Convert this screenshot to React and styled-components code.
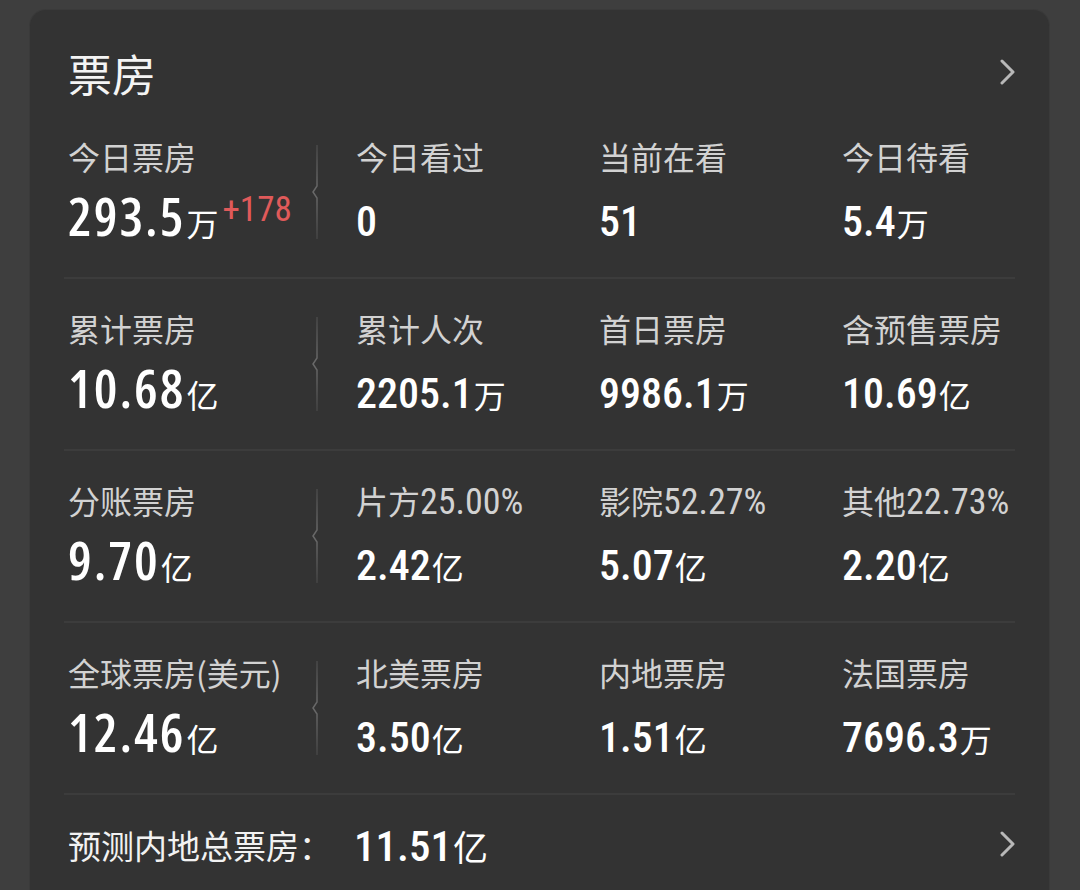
import React from "react";
import styled, { createGlobalStyle, css } from "styled-components";

const GlobalStyle = createGlobalStyle`
  html, body { margin: 0; padding: 0; background: #3e3e3e; }
  body { font-family: "Noto Sans CJK SC", "Noto Sans", sans-serif; overflow: hidden; }
`;

const BIG_FONT = `"Open Sans", "Roboto Condensed", Roboto, sans-serif`;
const SUB_FONT = `"Roboto Condensed", Roboto, "Noto Sans", sans-serif`;
const CJK_FONT = `"Noto Sans CJK SC", "Noto Sans", sans-serif`;

const Page = styled.div`
  padding: 10px 31px 0 30px;
  height: 890px;
  box-sizing: border-box;
`;

const Card = styled.section`
  background: #333333;
  border-radius: 16px;
  padding: 0 34px;
  box-shadow: 0 0 0 1px #3a3a3a;
`;

const Header = styled.div`
  display: flex;
  align-items: center;
  justify-content: space-between;
  padding: 38px 0 9px 4px;
  height: 50px;
`;

const Title = styled.h1`
  margin: 0;
  font-family: ${CJK_FONT};
  font-weight: 400;
  font-size: 44px;
  line-height: 50px;
  color: #f4f4f4;
`;

const ChevronBox = styled.span`
  display: flex;
  margin-right: -4px;
  margin-top: ${(p) => p.$dy || 0}px;
`;

const Chevron = ({ dy }) => (
  <ChevronBox $dy={dy}>
    <svg width="20" height="26" viewBox="0 0 20 26" fill="none">
      <polyline points="3,2 14,13 3,24" stroke="#b8b8b8" strokeWidth="3" strokeLinecap="round" strokeLinejoin="round" />
    </svg>
  </ChevronBox>
);

const Row = styled.div`
  display: grid;
  grid-template-columns: 288px 243px 243px 1fr;
  height: 170px;
  border-bottom: 2px solid #3c3c3c;
`;

const Cell = styled.div`
  display: flex;
  padding: 29px 0 0 4px;
  ${(p) => (p.$first ? "padding-right: 30px;" : "")}
`;

const CellBody = styled.div`
  flex: 1;
  display: flex;
  flex-direction: column;
`;

const Label = styled.div`
  font-family: ${CJK_FONT};
  font-size: 32px;
  line-height: 40px;
  height: 40px;
  color: #d2d2d2;
  white-space: nowrap;
  display: flex;
  align-items: baseline;
`;

const LabelNum = styled.span`
  font-family: ${SUB_FONT};
  font-stretch: 75%;
  font-size: 36px;
`;

const Value = styled.div`
  display: flex;
  align-items: baseline;
  margin-top: 12px;
  color: #ffffff;
  white-space: nowrap;
`;

const Num = styled.span`
  ${(p) =>
    p.$big
      ? css`
          font-family: ${BIG_FONT};
          font-stretch: 75%;
          font-weight: 600;
          font-size: 53px;
          line-height: 56px;
          letter-spacing: 2px;
        `
      : css`
          font-family: ${SUB_FONT};
          font-stretch: 75%;
          font-weight: 500;
          font-size: ${p.$size || 42}px;
          line-height: ${p.$lh || 68}px;
        `}
`;

const Unit = styled.span`
  font-family: ${CJK_FONT};
  font-size: ${(p) => p.$size || 32}px;
  margin-left: 1px;
`;

const Delta = styled.span`
  font-family: ${SUB_FONT};
  font-stretch: 75%;
  font-size: 35px;
  color: #e05a5a;
  align-self: flex-start;
  margin-left: 4px;
  line-height: 40px;
  margin-top: 2px;
`;

const SepSvg = styled.svg`
  flex: none;
  margin-top: 9px;
`;

const Separator = () => (
  <SepSvg width="10" height="94" viewBox="0 0 10 94">
    <defs>
      <linearGradient id="sepg" x1="0" y1="0" x2="0" y2="1">
        <stop offset="0" stopColor="#484848" />
        <stop offset="0.5" stopColor="#6a6a6a" />
        <stop offset="1" stopColor="#444444" />
      </linearGradient>
    </defs>
    <polyline points="5,0 5,41 1,47 5,53 5,94" fill="none" stroke="url(#sepg)" strokeWidth="1.5" />
  </SepSvg>
);

const Footer = styled.div`
  display: flex;
  align-items: center;
  padding: 28px 0 40px 4px;
  height: 44px;
`;

const FooterLabel = styled.span`
  font-family: ${CJK_FONT};
  font-size: 33px;
  color: #f2f2f2;
  line-height: 44px;
`;

const FooterValue = styled.span`
  display: flex;
  align-items: baseline;
  color: #ffffff;
  margin-left: 22px;
  flex: 1;
`;

const rows = [
  [
    { label: "今日票房", value: "293.5", unit: "万", delta: "+178" },
    { label: "今日看过", value: "0" },
    { label: "当前在看", value: "51" },
    { label: "今日待看", value: "5.4", unit: "万" },
  ],
  [
    { label: "累计票房", value: "10.68", unit: "亿" },
    { label: "累计人次", value: "2205.1", unit: "万" },
    { label: "首日票房", value: "9986.1", unit: "万" },
    { label: "含预售票房", value: "10.69", unit: "亿" },
  ],
  [
    { label: "分账票房", value: "9.70", unit: "亿" },
    { label: "片方", labelNum: "25.00%", value: "2.42", unit: "亿" },
    { label: "影院", labelNum: "52.27%", value: "5.07", unit: "亿" },
    { label: "其他", labelNum: "22.73%", value: "2.20", unit: "亿" },
  ],
  [
    { label: "全球票房(美元)", value: "12.46", unit: "亿" },
    { label: "北美票房", value: "3.50", unit: "亿" },
    { label: "内地票房", value: "1.51", unit: "亿" },
    { label: "法国票房", value: "7696.3", unit: "万" },
  ],
];

function Stat({ item, first }) {
  return (
    <Cell $first={first}>
      <CellBody>
        <Label>
          <span>{item.label}</span>
          {item.labelNum && <LabelNum>{item.labelNum}</LabelNum>}
        </Label>
        <Value>
          <Num $big={first}>{item.value}</Num>
          {item.unit && <Unit>{item.unit}</Unit>}
          {item.delta && <Delta>{item.delta}</Delta>}
        </Value>
      </CellBody>
      {first && <Separator />}
    </Cell>
  );
}

export default function App() {
  return (
    <Page>
      <GlobalStyle />
      <Card>
        <Header>
          <Title>票房</Title>
          <Chevron dy={-2} />
        </Header>
        {rows.map((row, i) => (
          <Row key={i}>
            {row.map((item, j) => (
              <Stat key={j} item={item} first={j === 0} />
            ))}
          </Row>
        ))}
        <Footer>
          <FooterLabel>预测内地总票房：</FooterLabel>
          <FooterValue>
            <Num $size={43} $lh={44}>11.51</Num>
            <Unit $size={35}>亿</Unit>
          </FooterValue>
          <Chevron dy={-2} />
        </Footer>
      </Card>
    </Page>
  );
}
